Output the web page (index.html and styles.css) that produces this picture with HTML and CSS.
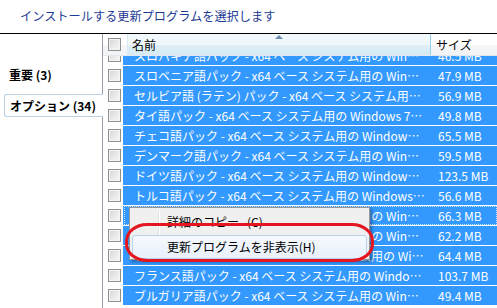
FILE: index.html
```html
<!DOCTYPE html>
<html lang="ja">
<head>
<meta charset="utf-8">
<link rel="stylesheet" href="styles.css">
</head>
<body>
<div class="title">インストールする更新プログラムを選択します</div>
<div class="main">
  <div class="side">
    <div class="cat">重要 (3)</div>
    <div class="cat tab">オプション (34)</div>
  </div>
  <div class="list">
    <div class="head">
      <div class="hcheck"><span class="cb"></span></div>
      <div class="hname">名前<span class="arrow"></span></div>
      <div class="hsize">サイズ</div>
    </div>
    <div class="body">
      <div class="rows">
        <div class="row"><div class="ccol"><span class="cb"></span></div><div class="name">スロバキア語パック - x64 ベース システム用の Windows 7 Service Pack 1</div><div class="size">46.5 MB</div></div>
        <div class="row"><div class="ccol"><span class="cb"></span></div><div class="name">スロベニア語パック - x64 ベース システム用の Windows 7 Service Pack 1</div><div class="size">47.9 MB</div></div>
        <div class="row"><div class="ccol"><span class="cb"></span></div><div class="name">セルビア語 (ラテン) パック - x64 ベース システム用の Windows 7 Service Pack 1</div><div class="size">56.9 MB</div></div>
        <div class="row"><div class="ccol"><span class="cb"></span></div><div class="name">タイ語パック - x64 ベース システム用の Windows 7 Service Pack 1</div><div class="size">49.8 MB</div></div>
        <div class="row"><div class="ccol"><span class="cb"></span></div><div class="name">チェコ語パック - x64 ベース システム用の Windows 7 Service Pack 1</div><div class="size">65.5 MB</div></div>
        <div class="row"><div class="ccol"><span class="cb"></span></div><div class="name">デンマーク語パック - x64 ベース システム用の Windows 7 Service Pack 1</div><div class="size">59.5 MB</div></div>
        <div class="row"><div class="ccol"><span class="cb"></span></div><div class="name">ドイツ語パック - x64 ベース システム用の Windows 7 Service Pack 1</div><div class="size">123.5 MB</div></div>
        <div class="row"><div class="ccol"><span class="cb"></span></div><div class="name">トルコ語パック - x64 ベース システム用の Windows 7 Service Pack 1</div><div class="size">56.6 MB</div></div>
        <div class="row focus"><div class="ccol"><span class="cb"></span></div><div class="name">ノルウェー語パック - x64 ベース システム用の Windows 7 Service Pack 1</div><div class="size">66.3 MB</div></div>
        <div class="row"><div class="ccol"><span class="cb"></span></div><div class="name">ハンガリー語パック - x64 ベース システム用の Windows 7 Service Pack 1</div><div class="size">62.2 MB</div></div>
        <div class="row"><div class="ccol"><span class="cb"></span></div><div class="name">フィンランド語パック - x64 ベース システム用の Windows 7 Service Pack 1</div><div class="size">64.4 MB</div></div>
        <div class="row"><div class="ccol"><span class="cb"></span></div><div class="name">フランス語パック - x64 ベース システム用の Windows 7 Service Pack 1</div><div class="size">103.7 MB</div></div>
        <div class="row"><div class="ccol"><span class="cb"></span></div><div class="name">ブルガリア語パック - x64 ベース システム用の Windows 7 Service Pack 1</div><div class="size">49.4 MB</div></div>
      </div>
      <div class="menu">
        <div class="gutter"></div>
        <div class="item">詳細のコピー&nbsp;&nbsp;&nbsp;(C)</div>
        <div class="item hot">更新プログラムを非表示(H)</div>
      </div>
      <div class="ring"></div>
    </div>
  </div>
</div>
</body>
</html>
```

FILE: styles.css
```css
html, body {
  margin: 0;
  padding: 0;
  background: #fff;
  width: 497px;
  height: 308px;
  overflow: hidden;
}
body {
  font-family: "Noto Sans CJK JP", "Noto Sans", sans-serif;
  font-size: 12px;
  color: #000;
}
.title {
  height: 33px;
  line-height: 33px;
  padding-left: 20px;
  color: #1e3b94;
  font-size: 12.2px;
  border-bottom: 1px solid #000;
  box-sizing: content-box;
  white-space: nowrap;
}
.main {
  display: flex;
  height: 274px;
}
.side {
  width: 102px;
  flex: none;
  display: flex;
  flex-direction: column;
}
.cat {
  font-weight: bold;
  font-size: 12px;
  line-height: 16px;
  white-space: nowrap;
}
.side .cat:first-child {
  margin-top: 33px;
  padding-left: 9px;
}
.tab {
  margin-top: 11px;
  margin-left: 4px;
  height: 21px;
  line-height: 21px;
  padding-left: 5px;
  border: 1px solid #b8d3e8;
  border-right: none;
  border-radius: 3px 0 0 3px;
  background: #fff;
  position: relative;
  z-index: 2;
  margin-right: -1px;
}
.list {
  flex: 1;
  border-left: 1px solid #9a9ea6;
  position: relative;
  display: flex;
  flex-direction: column;
  min-width: 0;
}
.head {
  height: 21px;
  display: flex;
  border-bottom: 1px solid #e3e8ee;
  flex: none;
}
.hcheck {
  width: 25px;
  flex: none;
  background: linear-gradient(#ffffff 0%, #ffffff 50%, #f4f6f7 51%, #f2f3f4 100%);
  border-right: 1px solid #d9eaf5;
  display: flex;
  align-items: center;
  padding-left: 5px;
  box-sizing: border-box;
}
.hname {
  width: 303px;
  flex: none;
  position: relative;
  padding-left: 4px;
  line-height: 21px;
  background: linear-gradient(#f2f9fc 0%, #eff7fb 50%, #dfeff8 51%, #d6eaf5 100%);
  border-right: 1px solid #96d0f3;
  box-sizing: border-box;
}
.arrow {
  position: absolute;
  left: 147px;
  top: 1px;
  width: 0;
  height: 0;
  border-left: 4px solid transparent;
  border-right: 4px solid transparent;
  border-bottom: 4px solid #6c8db2;
}
.hsize {
  flex: 1;
  padding-left: 5px;
  line-height: 21px;
  background: linear-gradient(#ffffff 0%, #ffffff 50%, #f6f7f8 51%, #f1f2f3 100%);
  white-space: nowrap;
}
.cb {
  display: inline-block;
  width: 13px;
  height: 13px;
  box-sizing: border-box;
  border: 1px solid #8e8f8f;
  background: linear-gradient(135deg, #d5d5d5 0%, #ececec 60%, #f6f6f6 100%);
  box-shadow: inset 0 0 0 1px #f4f4f4;
  flex: none;
}
.body {
  flex: 1;
  overflow: hidden;
  position: relative;
}
.rows {
  margin-top: -10px;
}
.row {
  display: flex;
  height: 19px;
  margin-bottom: 1px;
  line-height: 19px;
  font-size: 12px;
  color: #fff;
}
.ccol {
  width: 20px;
  flex: none;
  background: #fff;
  display: flex;
  align-items: center;
  padding-left: 5px;
  box-sizing: border-box;
}
.name {
  width: 310px;
  flex: none;
  box-sizing: border-box;
  padding: 0 8px 0 11px;
  background: #3399ff;
  white-space: nowrap;
  overflow: hidden;
  text-overflow: ellipsis;
}
.size {
  flex: 1;
  background: #3399ff;
  padding-left: 5px;
  white-space: nowrap;
}
.focus {
  position: relative;
}
.focus::after {
  content: "";
  position: absolute;
  left: 21px;
  right: 0;
  top: 0;
  bottom: 0;
  border: 1px dotted #c8e2ff;
}
.menu {
  position: absolute;
  left: 26px;
  top: 151px;
  width: 241px;
  height: 53px;
  box-sizing: border-box;
  background: #f0f0f0;
  border: 1px solid #979797;
  box-shadow: 2px 2px 3px rgba(0, 0, 0, 0.35);
  padding: 2px;
  z-index: 3;
}
.gutter {
  position: absolute;
  left: 28px;
  top: 2px;
  bottom: 2px;
  width: 1px;
  background: #e2e3e3;
  border-right: 1px solid #fff;
}
.item {
  position: relative;
  height: 22px;
  line-height: 22px;
  padding-left: 34px;
  font-size: 12px;
  white-space: nowrap;
  border: 1px solid transparent;
}
.item.hot {
  margin-top: 1px;
  border: 1px solid #b6d2ec;
  border-radius: 3px;
  background: linear-gradient(#f6f9fd, #e8f0fb);
}
.ring {
  position: absolute;
  left: 22px;
  top: 167px;
  width: 249px;
  height: 39px;
  box-sizing: border-box;
  border: 3px solid #e41620;
  border-radius: 22px / 18px;
  z-index: 4;
}
```
